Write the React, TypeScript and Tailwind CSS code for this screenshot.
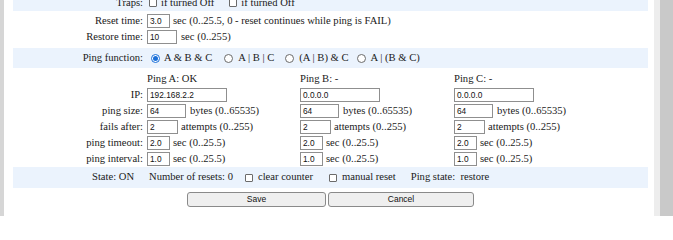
import React from "react";

function Field({ value, width }: { value: string; width: string }) {
  return (
    <span
      className={`inline-flex h-[14px] ${width} items-center border border-[#8f8f8f] bg-white pl-[2px] font-['Liberation_Sans',Arial,sans-serif] text-[8.3px] leading-none text-[#111]`}
    >
      {value}
    </span>
  );
}

function Check() {
  return <span className="inline-block h-[8px] w-[8px] rounded-[1px] border border-[#6b6b6b] bg-white" />;
}

function Radio({ on = false }: { on?: boolean }) {
  return on ? (
    <span className="inline-flex h-[9px] w-[9px] items-center justify-center rounded-full border border-[#1a6fd8] bg-white">
      <span className="h-[5px] w-[5px] rounded-full bg-[#1a6fd8]" />
    </span>
  ) : (
    <span className="inline-block h-[9px] w-[9px] rounded-full border border-[#6b6b6b] bg-white" />
  );
}

const pings = [
  { title: "Ping A: OK", ip: "192.168.2.2" },
  { title: "Ping B: -", ip: "0.0.0.0" },
  { title: "Ping C: -", ip: "0.0.0.0" },
];

function PingRow({ label, children }: { label: string; children: (i: number) => React.ReactNode }) {
  return (
    <>
      <span className="flex h-[16px] items-center justify-end pr-[4px]">{label}</span>
      {pings.map((p, i) => (
        <span key={p.title} className="flex h-[16px] items-center">
          {children(i)}
        </span>
      ))}
    </>
  );
}

export default function App() {
  return (
    <div className="flex h-[216px] w-[673px] overflow-hidden bg-white font-['Liberation_Serif','Times_New_Roman',serif] text-[10.6px] leading-none text-[#1a1a1a]">
      <div className="w-[4px] shrink-0 bg-[#d6d6d6]" />
      <div className="w-[9px] shrink-0" />
      <main className="flex w-[635px] shrink-0 flex-col">
        {/* traps, cut off at the top */}
        <div className="-mt-[7px] flex h-[18px] items-center bg-[#ebf3fd] pt-[2px]">
          <span className="w-[130px] text-right">Traps:</span>
          <span className="ml-[6px] flex items-center"><Check /></span>
          <span className="ml-[4px]">if turned Off</span>
          <span className="ml-[15px] flex items-center"><Check /></span>
          <span className="ml-[4px]">if turned Off</span>
        </div>

        <div className="flex flex-col pb-[3px] pt-[2px]">
          <div className="flex h-[16px] items-center">
            <span className="w-[130px] text-right">Reset time:</span>
            <span className="ml-[4px] flex"><Field value="3.0" width="w-[23px]" /></span>
            <span className="ml-[3px]">sec (0..25.5, 0 - reset continues while ping is FAIL)</span>
          </div>
          <div className="flex h-[16px] items-center">
            <span className="w-[130px] text-right">Restore time:</span>
            <span className="ml-[4px] flex"><Field value="10" width="w-[30px]" /></span>
            <span className="ml-[4px]">sec (0..255)</span>
          </div>
        </div>

        <div className="flex h-[20px] items-center bg-[#ebf3fd]">
          <span className="w-[130px] text-right">Ping function:</span>
          <span className="ml-[8px] flex"><Radio on /></span>
          <span className="ml-[4px]">A &amp; B &amp; C</span>
          <span className="ml-[12px] flex"><Radio /></span>
          <span className="ml-[5px]">A | B | C</span>
          <span className="ml-[11px] flex"><Radio /></span>
          <span className="ml-[5px]">(A | B) &amp; C</span>
          <span className="ml-[8px] flex"><Radio /></span>
          <span className="ml-[5px]">A | (B &amp; C)</span>
        </div>

        <div className="grid grid-cols-[134px_153px_154px_1fr] pt-[3px]">
          <span className="h-[16px]" />
          {pings.map((p) => (
            <span key={p.title} className="flex h-[16px] items-center">{p.title}</span>
          ))}

          <PingRow label="IP:">{(i) => <Field value={pings[i].ip} width="w-[80px]" />}</PingRow>

          <PingRow label="ping size:">
            {() => (
              <>
                <Field value="64" width="w-[39px]" />
                <span className="ml-[4px]">bytes (0..65535)</span>
              </>
            )}
          </PingRow>

          <PingRow label="fails after:">
            {() => (
              <>
                <Field value="2" width="w-[31px]" />
                <span className="ml-[3px]">attempts (0..255)</span>
              </>
            )}
          </PingRow>

          <PingRow label="ping timeout:">
            {() => (
              <>
                <Field value="2.0" width="w-[23px]" />
                <span className="ml-[3px]">sec (0..25.5)</span>
              </>
            )}
          </PingRow>

          <PingRow label="ping interval:">
            {() => (
              <>
                <Field value="1.0" width="w-[23px]" />
                <span className="ml-[3px]">sec (0..25.5)</span>
              </>
            )}
          </PingRow>
        </div>

        <div className="flex h-[21px] items-center bg-[#ebf3fd] pl-[79px]">
          <span>State: ON</span>
          <span className="ml-[15px]">Number of resets: 0</span>
          <span className="ml-[12px] flex"><Check /></span>
          <span className="ml-[5px]">clear counter</span>
          <span className="ml-[16px] flex"><Check /></span>
          <span className="ml-[5px]">manual reset</span>
          <span className="ml-[15px] whitespace-pre">Ping state:  restore</span>
        </div>

        <div className="mt-[4px] flex justify-center gap-[2px] font-['Liberation_Sans',Arial,sans-serif]">
          <button type="button" className="h-[15px] w-[139px] rounded-[3px] border border-[#8a8a8a] bg-[#efefef] text-[8.5px] leading-none text-[#111]">
            Save
          </button>
          <button type="button" className="h-[15px] w-[146px] rounded-[3px] border border-[#8a8a8a] bg-[#efefef] text-[8.5px] leading-none text-[#111]">
            Cancel
          </button>
        </div>
      </main>
      <div className="w-[6px] shrink-0" />
      <div className="w-[6px] shrink-0 bg-[#ededed]" />
      <div className="flex-1 bg-[#c9c9c9]" />
    </div>
  );
}
